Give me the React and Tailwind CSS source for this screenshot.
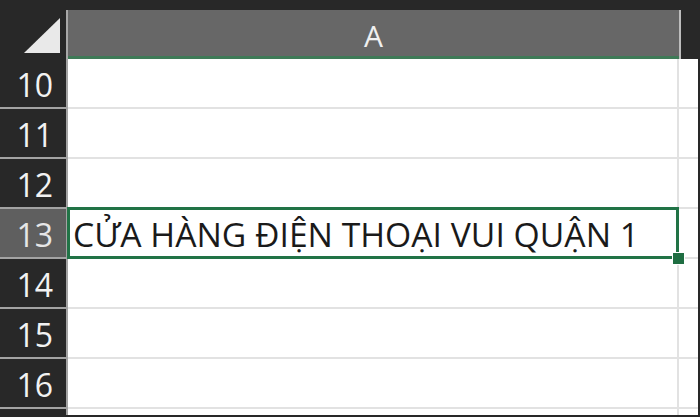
const rows = [10, 11, 12, 13, 14, 15, 16];

const App = () => {
  return (
    <div className="w-[700px] h-[417px] bg-[#282828] pt-[10px] pr-[2px] pb-[2px] overflow-hidden" style={{ fontFamily: '"Open Sans", "Noto Sans", sans-serif' }}>
      <div className="h-full flex flex-col overflow-hidden bg-white">
        {/* header row */}
        <div className="flex h-[49px] shrink-0 bg-[#282828]">
          <div className="w-[68px] shrink-0 flex items-end justify-end pr-[4px] pb-[5px] border-r-2 border-[#a8a8a8]">
            <svg width="38" height="36" viewBox="0 0 38 36">
              <polygon points="0,35 36,0 36,35" fill="#e9e9e9" />
            </svg>
          </div>
          <div className="w-[611px] shrink-0 bg-[#676767] border-b-[3px] border-[#3f7a57] flex items-center justify-center text-[#f0f0f0] text-[30px] leading-none pt-[5px]">
            A
          </div>
          <div className="flex-1 border-l-2 border-[#bdbdbd] bg-[#282828]" />
        </div>

        {rows.concat([17]).map((n) => (
          <div key={n} className="flex h-[50px] shrink-0">
            <div
              className={`w-[68px] shrink-0 flex items-center justify-end pr-[13px] pt-[3px] text-[32px] leading-none border-r-2 border-b-2 border-[#a3a3a3] ${n === 13 ? 'bg-[#5f5f5f] text-[#e6e6e6]' : 'bg-[#282828] text-[#f2f2f2]'}`}
            >
              {n <= 16 ? n : ''}
            </div>
            <div className="relative w-[611px] shrink-0 border-b-2 border-r-2 border-[#e2e2e2] flex items-center">
              {n === 13 && (
                <>
                  <span className="pl-[5px] pt-[3px] text-[33.7px] leading-none text-[#1a1a1a] whitespace-nowrap">
                    CỬA HÀNG ĐIỆN THOẠI VUI QUẬN 1
                  </span>
                  <div className="absolute -left-[1px] -top-[2px] -right-[2px] -bottom-[2px] border-[3px] border-[#217346]" />
                  <div className="absolute z-10 -right-[7px] -bottom-[7px] w-[11px] h-[11px] bg-[#1f6e42] ring-1 ring-white" />
                </>
              )}
            </div>
            <div className="flex-1 border-b-2 border-[#e2e2e2]" />
          </div>
        ))}
      </div>
    </div>
  );
};

export default App;
